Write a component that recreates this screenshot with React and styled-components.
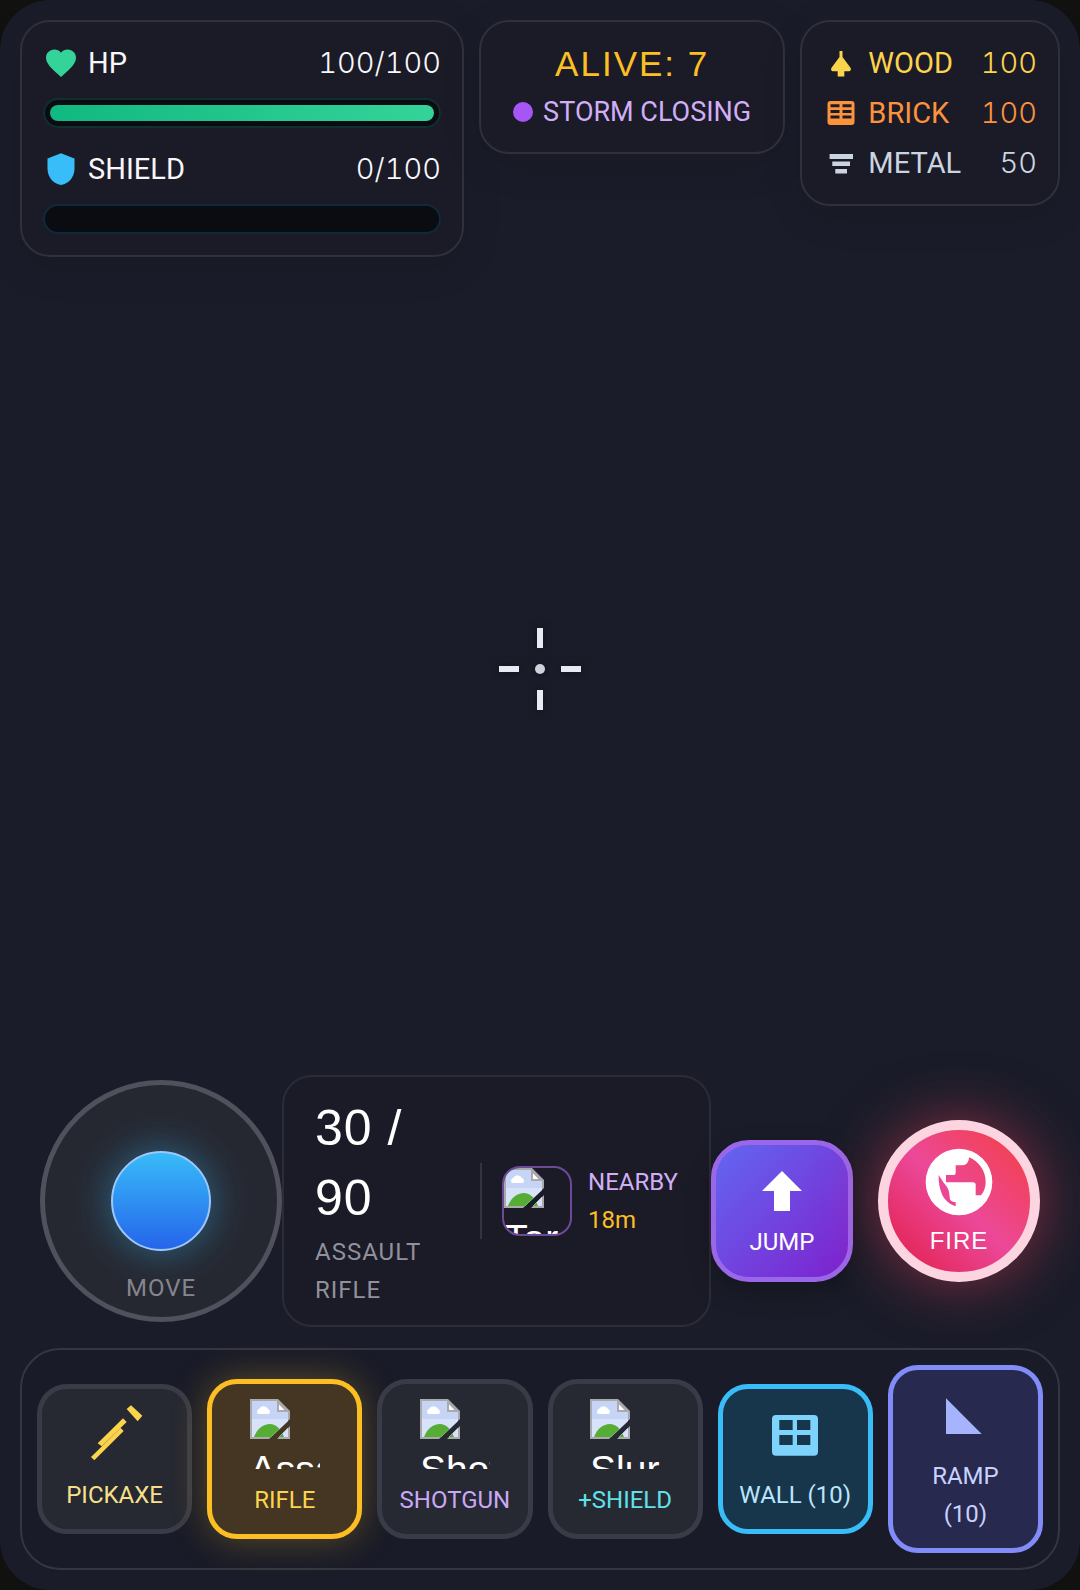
import React from 'react';
import styled, { createGlobalStyle } from 'styled-components';
import { MdFavorite } from 'react-icons/md';

const fonts = {
    label: "'Roboto', 'Liberation Sans', sans-serif",
    number: "'Inter', 'Liberation Sans', sans-serif",
    display: "'Liberation Sans', Arial, sans-serif",
};

const GlobalStyle = createGlobalStyle`
    *,
    *::before,
    *::after {
        box-sizing: border-box;
    }

    body {
        margin: 0;
        background-color: #11110f;
        font-family: ${fonts.label};
    }

    button {
        margin: 0;
        font: inherit;
        cursor: pointer;
    }
`;

const Hud = styled.main`
    display: flex;
    flex-direction: column;
    min-height: 100vh;
    padding: 20px;
    border-radius: 50px;
    background-color: #1a1c29;
    color: white;
`;

/* Top row */

const TopBar = styled.header`
    display: grid;
    grid-template-columns: 1.71fr 1.18fr 1fr;
    align-items: start;
    gap: 15px;
`;

const Panel = styled.section`
    display: flex;
    flex-direction: column;
    gap: ${({ $gap }) => $gap}px;
    padding: 21px;
    border: 2px solid #2f303b;
    border-radius: 30px;
    background-color: #1b1a27;
    box-shadow: 0 10px 40px rgba(0, 0, 0, 0.1);
`;

const Stat = styled.div`
    display: flex;
    flex-direction: column;
    gap: 15px;
`;

const Row = styled.div`
    display: flex;
    align-items: center;
    gap: 9px;
    color: ${({ $color }) => $color || '#f8f8fc'};
    font-size: 29px;
    line-height: 40px;
`;

const Icon = styled.svg`
    flex: none;
    width: 36px;
    height: 36px;
    fill: ${({ $color }) => $color || 'currentColor'};
`;

const Value = styled.span`
    margin-left: auto;
    font-family: ${fonts.number};
    font-weight: 300;
    font-variant-numeric: tabular-nums;
`;

const Track = styled.div`
    height: 30px;
    padding: 5px;
    border: 2px solid ${({ $edge }) => $edge};
    border-radius: 15px;
    background-color: #0b0c12;
`;

const Fill = styled.div`
    height: 16px;
    border-radius: 8px;
    background: linear-gradient(90deg, #10b981, #34d399);
`;

const Alive = styled.div`
    color: #fbbf24;
    font-family: ${fonts.display};
    font-size: 35px;
    letter-spacing: 2px;
    line-height: 42px;
    text-align: center;
`;

const Storm = styled.div`
    display: flex;
    align-items: center;
    justify-content: center;
    gap: 10px;
    color: #d0aff6;
    font-size: 27px;
    line-height: 38px;
    white-space: nowrap;

    &::before {
        content: '';
        width: 20px;
        height: 20px;
        border-radius: 50%;
        background-color: #a855f7;
    }
`;

/* Middle */

const Scene = styled.div`
    flex: 1;
    display: flex;
    align-items: center;
    justify-content: center;
    padding-top: 6px;
`;

const Crosshair = styled.svg`
    width: 82px;
    height: 82px;
    filter: drop-shadow(0 0 4px rgba(0, 0, 0, 0.5));
`;

/* Controls */

const Controls = styled.div`
    display: flex;
    align-items: center;
    margin-bottom: 21px;
    padding: 0 20px;
`;

const Joystick = styled.button`
    flex: none;
    display: grid;
    grid-template-rows: 1fr auto 1fr;
    justify-items: center;
    width: 242px;
    height: 242px;
    padding: 0;
    border: 5px solid #50515c;
    border-radius: 50%;
    background-color: #262831;
    color: #85858e;
`;

const Knob = styled.span`
    grid-row: 2;
    width: 100px;
    height: 100px;
    border: 2px solid #9cc8fb;
    border-radius: 50%;
    background: linear-gradient(180deg, #38bdf8, #2563eb);
    background-origin: border-box;
    box-shadow: 0 0 40px rgba(56, 189, 248, 0.45);
`;

const Caption = styled.span`
    font-size: 24px;
    letter-spacing: ${({ $tracking }) => $tracking || 0}px;
    line-height: 38px;
`;

const JoystickCaption = styled(Caption)`
    grid-row: 3;
    align-self: end;
    padding-bottom: 10px;
`;

const AmmoPanel = styled.section`
    flex: 1;
    display: flex;
    align-items: center;
    gap: 20px;
    padding: 16px 31px;
    border: 2px solid #2b2c38;
    border-radius: 30px;
    background-color: #1b1a27;
`;

const Ammo = styled.div`
    flex: 1;
    min-width: 0;
    color: #91919c;
`;

const AmmoCount = styled.div`
    color: white;
    font-family: ${fonts.display};
    font-size: 50px;
    letter-spacing: 1px;
    line-height: 70px;
`;

const AmmoName = styled(Caption)`
    display: block;
`;

const Target = styled.div`
    display: flex;
    align-items: center;
    gap: 16px;
    padding-left: 20px;
    border-left: 2px solid #33343f;
`;

const TargetInfo = styled.div`
    color: #d0aff6;
    font-size: 24px;
    line-height: 38px;
`;

const Distance = styled.div`
    color: #fbbf24;
`;

const Thumb = styled.span`
    flex: none;
    display: block;
    width: 70px;
    height: 70px;
    overflow: hidden;
    color: white;
    font-family: ${fonts.display};
    font-size: 39px;
    line-height: 62px;
    text-align: left;
    white-space: nowrap;

    svg {
        display: block;
        width: 40px;
        height: 40px;
    }
`;

const TargetThumb = styled(Thumb)`
    border: 2px solid #6d4a97;
    border-radius: 18px;
`;

const Actions = styled.div`
    display: flex;
    align-items: flex-end;
    gap: 25px;
`;

const ActionButton = styled.button`
    display: flex;
    flex-direction: column;
    align-items: center;
    justify-content: center;
    padding: 0;
    color: white;
`;

const JumpButton = styled(ActionButton)`
    gap: 2px;
    width: 142px;
    height: 142px;
    border: 5px solid #9a67e8;
    border-radius: 38px;
    background: linear-gradient(135deg, #6366f1, #7e22ce);
    box-shadow: 0 10px 25px rgba(0, 0, 0, 0.25);
`;

const FireButton = styled(ActionButton)`
    width: 162px;
    height: 162px;
    border: 10px solid #fcd5e1;
    border-radius: 50%;
    background: linear-gradient(45deg, #e11d48, #ec4899, #f43f3f);
    box-shadow: 0 0 60px rgba(244, 63, 94, 0.5);
`;

const ActionIcon = styled.svg`
    width: ${({ $size }) => $size}px;
    height: ${({ $size }) => $size}px;
    fill: currentColor;
`;

const FireCaption = styled(Caption)`
    font-family: ${fonts.display};
`;

/* Slots */

const SlotBar = styled.nav`
    display: grid;
    grid-template-columns: repeat(6, 1fr);
    align-items: center;
    gap: 15px;
    padding: 15px;
    border: 2px solid #343641;
    border-radius: 40px;
    background-color: #191b28;
`;

const Slot = styled.button`
    display: flex;
    flex-direction: column;
    align-items: center;
    gap: 12px;
    padding: 15px 0;
    border: 5px solid ${({ $border }) => $border || '#393b46'};
    border-radius: 30px;
    background-color: ${({ $bg }) => $bg || '#262832'};
    box-shadow: ${({ $glow }) => ($glow ? '0 0 36px rgba(251, 191, 36, 0.3)' : 'none')};
    color: ${({ $color }) => $color};
    font-size: 24px;
    line-height: 38px;
`;

const SlotIcon = styled.svg`
    width: 60px;
    height: 60px;
    fill: ${({ $color }) => $color};
`;

const SlotLabel = styled.span`
    white-space: pre;
`;

const icons = {
    shield: <path d="M12 1.5 3 5v6.5c0 6 3.6 10.2 9 11.2 5.4-1 9-5.2 9-11.2V5z" />,
    wood: <path d="M11 4h2v4l5.2 7c.9 1.4.3 2.5-1.2 2.5h-2.8V21H9.8v-3.5H7c-1.5 0-2.1-1.1-1.2-2.5L11 8z" />,
    brick: (
        <path
            fillRule="evenodd"
            d="M5 4h14a2 2 0 0 1 2 2v12a2 2 0 0 1-2 2H5a2 2 0 0 1-2-2V6a2 2 0 0 1 2-2zM5 6.2v2h6v-2zM13 6.2v2h6v-2zM5 10v2h6v-2zM13 10v2h6v-2zM5 13.6v2h6v-2zM13 13.6v2h6v-2z"
        />
    ),
    metal: <path d="M4.4 6H20v3.4H4.4zM6.2 11H18v3H6.2zM8.2 16H16v3H8.2z" />,
    globe: (
        <path
            fillRule="evenodd"
            d="M12 2a10 10 0 1 0 0 20 10 10 0 0 0 0-20zM15 4.6C18 5.8 20 8.7 20 12c0 1.5-.5 2.9-1.4 4H17v-3.1c0-.5-.3-.8-.8-.8H8.1V9.9h2.2c.4 0 .7-.3.7-.7V7h2c1.2 0 2-1 2-2.4zM5.9 9.9l1.4 2.2c.9 1 1.5 1.8 1.7 2.8l.3 2.4c.4.5 1 .7 1.7.7v1.3c-1.7-.5-3.2-1.8-4-3.4-.8-1.8-1.2-3.8-1.1-6z"
        />
    ),
};

const BrokenImage = () => (
    <svg viewBox="0 0 40 40" aria-hidden="true">
        <clipPath id="torn">
            <path d="M0 0h40v20L19 40H0zM40 27v13H27z" />
        </clipPath>
        <g clipPath="url(#torn)">
            <path d="M0 0h28l12 12v28H0z" fill="#a9a9ae" />
            <path d="M2 2h25v11h11v25H2z" fill="#c6d5f5" />
            <path d="M2 20h36v18H2z" fill="#d8e2f8" />
            <path d="M8 15a3 3 0 0 1 1-5 5 5 0 0 1 9 0 3 3 0 0 1 1 5z" fill="white" />
            <path d="M4 38c3-8 9-13 16-13 6 0 11 5 14 13z" fill="#55ad35" />
            <path d="M28 3v9h9z" fill="white" stroke="#a9a9ae" strokeWidth="2" />
        </g>
    </svg>
);

const resources = [
    { name: 'WOOD', amount: 100, color: '#fcd34d' },
    { name: 'BRICK', amount: 100, color: '#fb923c' },
    { name: 'METAL', amount: 50, color: '#cbd5e1' },
];

const slots = [
    {
        label: 'PICKAXE',
        color: '#f8e08a',
        iconColor: '#fcd34d',
        icon: <path d="M125 15 138 4l34 31-14 17zM114 43l11 11-75 73-12-9zM107 72l9 9-88 88-10-10z" />,
    },
    { label: 'RIFLE', alt: 'Assault', color: '#fcd34d', border: '#fbbf24', bg: '#443622', glow: true },
    { label: 'SHOTGUN', alt: 'Shotgun', color: '#c9a9f5' },
    { label: '+SHIELD', alt: 'Slurp', color: '#62e0ea' },
    {
        label: 'WALL (10)',
        color: '#bae6fd',
        iconColor: '#7dd3fc',
        border: '#38bdf8',
        bg: '#17364c',
        icon: (
            <path
                fillRule="evenodd"
                d="M33 33h114a12 12 0 0 1 12 12v98a12 12 0 0 1-12 12H33a12 12 0 0 1-12-12V45a12 12 0 0 1 12-12zM43 48v30h40V48zM96 48v30h40V48zM43 93v30h40V93zM96 93v30h40V93z"
            />
        ),
    },
    {
        label: 'RAMP\n(10)',
        color: '#c7d2fe',
        iconColor: '#a5b4fc',
        border: '#818cf8',
        bg: '#27294f',
        icon: <path d="M33 40 140 147H33z" />,
    },
];

const App = () => {
    return (
        <>
            <GlobalStyle />
            <Hud>
                <TopBar>
                    <Panel $gap={21}>
                        <Stat>
                            <Row>
                                <Icon as={MdFavorite} color="#34d399" />
                                <span>HP</span>
                                <Value>100/100</Value>
                            </Row>
                            <Track role="progressbar" aria-label="HP" aria-valuenow={100} $edge="#10302f">
                                <Fill />
                            </Track>
                        </Stat>
                        <Stat>
                            <Row>
                                <Icon viewBox="0 0 24 24" $color="#38bdf8">
                                    {icons.shield}
                                </Icon>
                                <span>SHIELD</span>
                                <Value>0/100</Value>
                            </Row>
                            <Track role="progressbar" aria-label="Shield" aria-valuenow={0} $edge="#102a3c" />
                        </Stat>
                    </Panel>
                    <Panel $gap={8}>
                        <Alive>ALIVE: 7</Alive>
                        <Storm>STORM CLOSING</Storm>
                    </Panel>
                    <Panel $gap={10}>
                        {resources.map(({ name, amount, color }) => (
                            <Row key={name} $color={color}>
                                <Icon viewBox="0 0 24 24">{icons[name.toLowerCase()]}</Icon>
                                <span>{name}</span>
                                <Value>{amount}</Value>
                            </Row>
                        ))}
                    </Panel>
                </TopBar>

                <Scene>
                    <Crosshair viewBox="0 0 82 82" fill="#e9e9f3">
                        <path d="M38 0h6v20h-6zM38 62h6v20h-6zM0 38h20v6H0zM62 38h20v6H62z" />
                        <circle cx="41" cy="41" r="5" fill="#d0d1db" />
                    </Crosshair>
                </Scene>

                <Controls>
                    <Joystick type="button">
                        <Knob />
                        <JoystickCaption $tracking={1}>MOVE</JoystickCaption>
                    </Joystick>
                    <AmmoPanel>
                        <Ammo>
                            <AmmoCount>30 / 90</AmmoCount>
                            <AmmoName $tracking={1}>ASSAULT RIFLE</AmmoName>
                        </Ammo>
                        <Target>
                            <TargetThumb>
                                <BrokenImage />
                                Target
                            </TargetThumb>
                            <TargetInfo>
                                NEARBY
                                <Distance>18m</Distance>
                            </TargetInfo>
                        </Target>
                    </AmmoPanel>
                    <Actions>
                        <JumpButton type="button">
                            <ActionIcon viewBox="0 0 60 60" $size={60}>
                                <path d="M30 10 50 30H38v20H22V30H10z" />
                            </ActionIcon>
                            <Caption>JUMP</Caption>
                        </JumpButton>
                        <FireButton type="button">
                            <ActionIcon viewBox="0 0 24 24" $size={80}>
                                {icons.globe}
                            </ActionIcon>
                            <FireCaption $tracking={1}>FIRE</FireCaption>
                        </FireButton>
                    </Actions>
                </Controls>

                <SlotBar>
                    {slots.map((slot) => (
                        <Slot
                            key={slot.label}
                            type="button"
                            $border={slot.border}
                            $bg={slot.bg}
                            $color={slot.color}
                            $glow={slot.glow}
                        >
                            {slot.icon ? (
                                <SlotIcon viewBox="0 0 180 180" $color={slot.iconColor}>
                                    {slot.icon}
                                </SlotIcon>
                            ) : (
                                <Thumb>
                                    <BrokenImage />
                                    {slot.alt}
                                </Thumb>
                            )}
                            <SlotLabel>{slot.label}</SlotLabel>
                        </Slot>
                    ))}
                </SlotBar>
            </Hud>
        </>
    );
};

export default App;
